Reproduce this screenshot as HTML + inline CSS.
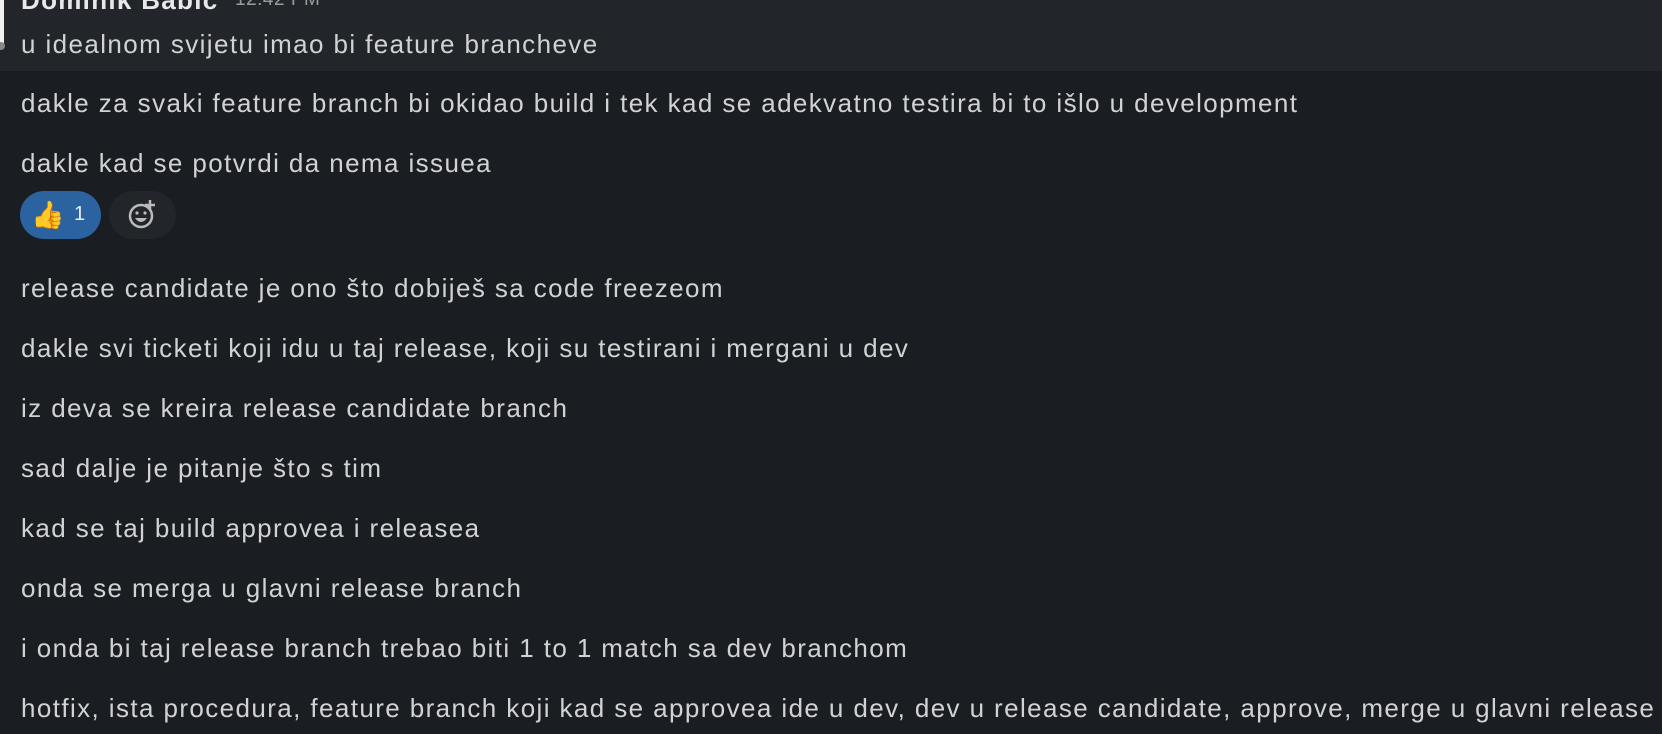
<!DOCTYPE html>
<html><head><meta charset="utf-8"><style>
html,body{margin:0;padding:0;width:1662px;height:734px;overflow:hidden;background:#1a1d21;font-family:"Liberation Sans",sans-serif;color:#d1d2d3;}
.top{position:absolute;left:0;top:0;width:1662px;height:71px;background:#222529;}
.strip{position:absolute;left:0;top:0;width:4px;height:46px;background:#f0f0f0;}
.dot{position:absolute;left:-3px;top:42px;width:8px;height:8px;border-radius:50%;background:#888;}
.l{position:absolute;left:21px;font-size:26px;line-height:30px;white-space:nowrap;letter-spacing:1.4px;}
.name{position:absolute;left:21px;top:-15px;font-size:26px;line-height:30px;font-weight:bold;color:#e8e8e8;letter-spacing:1.3px;}
.time{position:absolute;left:235px;top:-11px;font-size:19px;line-height:22px;color:#9a9b9d;letter-spacing:0.5px;}
.r1{position:absolute;left:20px;top:191px;width:81px;height:48px;border-radius:24px;background:#2b62a0;}
.r1 .e{position:absolute;left:11px;top:8px;font-size:27px;}
.r1 .n{position:absolute;left:54px;top:12px;font-size:20px;color:#e8eef5;}
.r2{position:absolute;left:109px;top:191px;width:67px;height:48px;border-radius:24px;background:#222529;}
</style></head><body>
<div class="top"></div>
<div class="strip"></div><div class="dot"></div>
<div class="name">Dominik Babic</div><div class="time">12:42 PM</div>
<div class="l" style="top:29px">u idealnom svijetu imao bi feature brancheve</div>
<div class="l" style="top:88px">dakle za svaki feature branch bi okidao build i tek kad se adekvatno testira bi to išlo u development</div>
<div class="l" style="top:148px">dakle kad se potvrdi da nema issuea</div>
<div class="r1"><span class="e">👍</span><span class="n">1</span></div>
<div class="r2"><svg width="67" height="48" viewBox="0 0 67 48"><circle cx="32" cy="25" r="11" fill="none" stroke="#bbb" stroke-width="2.5"/><circle cx="28" cy="22" r="1.6" fill="#bbb"/><circle cx="36" cy="22" r="1.6" fill="#bbb"/><path d="M26 27 Q32 35 38 27 Z" fill="#bbb"/><path d="M41 9v10M36 14h10" stroke="#bbb" stroke-width="2.5"/></svg></div>
<div class="l" style="top:273px">release candidate je ono što dobiješ sa code freezeom</div>
<div class="l" style="top:333px">dakle svi ticketi koji idu u taj release, koji su testirani i mergani u dev</div>
<div class="l" style="top:393px">iz deva se kreira release candidate branch</div>
<div class="l" style="top:453px">sad dalje je pitanje što s tim</div>
<div class="l" style="top:513px">kad se taj build approvea i releasea</div>
<div class="l" style="top:573px">onda se merga u glavni release branch</div>
<div class="l" style="top:633px">i onda bi taj release branch trebao biti 1 to 1 match sa dev branchom</div>
<div class="l" style="top:693px">hotfix, ista procedura, feature branch koji kad se approvea ide u dev, dev u release candidate, approve, merge u glavni release</div>
</body></html>
